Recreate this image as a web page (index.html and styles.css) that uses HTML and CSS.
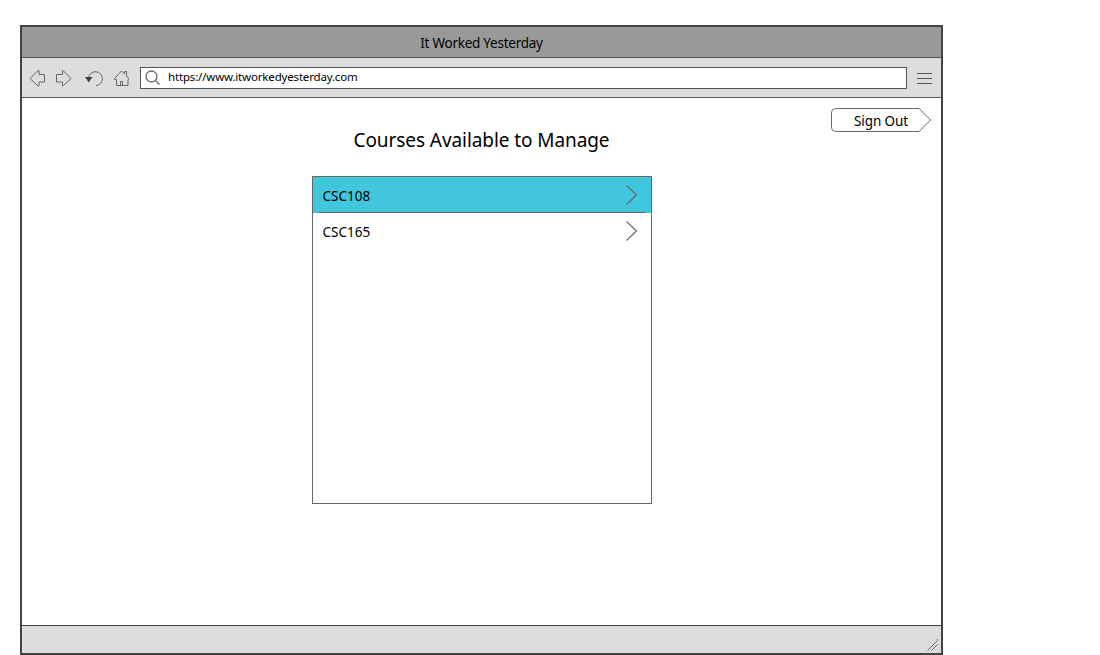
FILE: index.html
```
<!DOCTYPE html>
<html lang="en">
<head>
<meta charset="utf-8">
<title>It Worked Yesterday</title>
<link rel="stylesheet" href="styles.css">
</head>
<body>
<div class="window">
  <header class="titlebar"><span class="title-text">It Worked Yesterday</span></header>
  <nav class="toolbar">
    <svg class="nav-icons" width="110" height="39" viewBox="0 0 110 39">
      <path class="stroke" d="M8 20.500L15.500 13L17 12.500V16.500H22.500V24H17V28L15.500 27.500Z"/>
      <path class="stroke" d="M49 20.500L41.500 13L40.500 12.500V16.500H34.500V24H40.500V28L41.500 27.500Z"/>
      <path class="stroke" d="M66.500 19.500A7 7 0 1 1 74 27.700"/>
      <path class="solid" d="M63 19H70.500L66.700 24.500Z"/>
      <path class="stroke" d="M94.500 27.500V21.500H92.500V20.500L99.500 13L102.500 16V13.500H104.500V18L106.500 20.500V21.500H106V27.500ZM98.500 27.500V23.500H100.500V27.500"/>
    </svg>
    <div class="address">
      <svg width="20" height="20" viewBox="0 0 20 20"><circle class="lens" cx="10.500" cy="8.500" r="5.500"/><path class="lens" d="M14.500 12.500L18.500 16.500"/></svg>
      <span class="url">https://www.itworkedyesterday.com</span>
    </div>
    <div class="menu"><i></i><i></i><i></i></div>
  </nav>
  <main class="content">
    <button class="signout">
      <svg width="101" height="24" viewBox="0 0 101 24"><path class="outline" d="M4.500 .5H88L99.500 12L88 23.500H4.500Q.5 23.500 .5 19.500V4.500Q.5 .5 4.500 .5Z"/></svg>
      <span class="signout-text">Sign Out</span>
    </button>
    <h1><span class="heading-text">Courses Available to Manage</span></h1>
    <div class="courses">
      <div class="course selected"><span class="course-name">CSC108</span><svg width="12" height="21" viewBox="0 0 12 21"><path class="chevron" d="M.5 .5L10.500 10L.5 19.500"/></svg></div>
      <div class="course"><span class="course-name">CSC165</span><svg width="12" height="21" viewBox="0 0 12 21"><path class="chevron" d="M.5 .5L10.500 10L.5 19.500"/></svg></div>
    </div>
  </main>
  <footer class="status"><svg width="12" height="13" viewBox="0 0 12 13"><path class="grip" d="M.5 12.500L10.500 2.500V1M4.500 12.500L10.500 6.500"/></svg></footer>
</div>
</body>
</html>
```
FILE: styles.css
```
* { box-sizing: border-box; }
body { margin: 0; background: #fff; color: #000; font-family: "Noto Sans", "Open Sans", sans-serif; overflow: hidden; }
svg { display: block; flex: none; }
.window { margin: 25px 0 0 20px; width: 923px; height: 630px; border: 2px solid #444; display: flex; flex-direction: column; }
.titlebar { height: 31px; background: #999; border-bottom: 1px solid #555; display: flex; justify-content: center; align-items: center; }
.title-text { font-size: 13.500px; letter-spacing: -.25px; padding-top: 1px; white-space: nowrap; }
.toolbar { height: 40px; background: #ddd; border-bottom: 1px solid #555; display: flex; }
.stroke, .lens, .outline, .chevron, .grip { fill: none; stroke: #666; stroke-width: 1; }
.lens { stroke-width: 1.3; }
.chevron { stroke-width: 1.1; }
.solid { fill: #444; }
.nav-icons { margin-right: 8px; }
.address { width: 767px; height: 22px; margin-top: 9px; background: #fff; border: 1px solid #555; display: flex; align-items: center; }
.url { font-size: 11.5px; line-height: 18px; padding-bottom: 2px; margin-left: 7px; letter-spacing: -.17px; white-space: nowrap; }
.menu { width: 15px; margin: 15px 0 0 10px; display: flex; flex-direction: column; gap: 4px; }
.menu i { height: 1px; background: #555; }
.content { height: 527px; display: flex; flex-direction: column; align-items: center; }
.signout { display: grid; align-self: flex-end; width: 101px; height: 24px; margin: 10px 9px 0 0; padding: 0; border: 0; background: none; font: inherit; color: inherit; }
.signout > * { grid-area: 1 / 1; }
.outline { fill: #fff; }
.signout-text { font-size: 13.500px; line-height: 24px; padding-top: 1px; letter-spacing: -.1px; text-align: left; padding-left: 23px; white-space: nowrap; }
h1 { margin: -7px 0 0; height: 51px; line-height: 30px; font-weight: 400; font-size: 19px; }
.heading-text { letter-spacing: -.08px; white-space: nowrap; }
.courses { width: 340px; height: 328px; border: 1px solid #666; }
.course { height: 36px; padding: 0 13px 0 10px; display: flex; align-items: center; justify-content: space-between; font-size: 13.500px; letter-spacing: 0; }
.course-name { padding-top: 2px; }
.selected { background: linear-gradient(#666, #666) 6px 35px / 327px 1px no-repeat #40c7de; }
.status { height: 28px; background: #ddd; border-top: 1px solid #444; display: flex; justify-content: flex-end; align-items: flex-end; padding: 0 2px 2px 0; }
```
